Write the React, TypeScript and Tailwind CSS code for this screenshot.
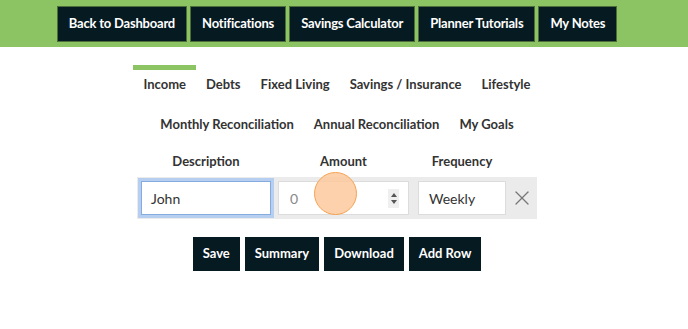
import { X } from 'lucide-react';

const NAV = ['Back to Dashboard', 'Notifications', 'Savings Calculator', 'Planner Tutorials', 'My Notes'];
const TABS_1 = ['Income', 'Debts', 'Fixed Living', 'Savings / Insurance', 'Lifestyle'];
const TABS_2 = ['Monthly Reconciliation', 'Annual Reconciliation', 'My Goals'];
const ACTIONS = ['Save', 'Summary', 'Download', 'Add Row'];

function Tab({ label, active }: { label: string; active?: boolean }) {
  return (
    <div
      className={`h-[40px] px-[10px] pt-[5px] border-t-[5px] leading-[18px] text-[13px] font-bold text-[#333] ${
        active ? 'border-[#8cc463]' : 'border-transparent'
      }`}
    >
      {label}
    </div>
  );
}

export default function App() {
  return (
    <div className="w-[688px] h-[329px] bg-white font-['Lato','Open_Sans',sans-serif]">
      {/* top nav */}
      <div className="h-[47px] bg-[#8cc463] pr-[14px] pt-[6px] flex justify-center gap-[3px]">
        {NAV.map((n) => (
          <div
            key={n}
            className="h-[36px] px-[11px] flex items-center bg-[#061a22] text-white text-[13px] tracking-[-0.2px] font-bold border border-[#4d6e3a]"
          >
            {n}
          </div>
        ))}
      </div>

      <div className="pr-[14px] flex flex-col items-center">
        {/* tabs */}
        <div className="mt-[18px] flex">
          {TABS_1.map((t, i) => (
            <Tab key={t} label={t} active={i === 0} />
          ))}
        </div>
        <div className="flex">
          {TABS_2.map((t) => (
            <Tab key={t} label={t} />
          ))}
        </div>

        {/* form */}
        <div className="flex flex-col">
          <div className="h-[32px] pt-[7px] pl-[4px] flex leading-[18px] text-[13px] font-bold text-[#333]">
            <div className="w-[130px] text-center">Description</div>
            <div className="w-[131px] ml-[7px] text-center">Amount</div>
            <div className="w-[88px] ml-[9px] text-center">Frequency</div>
          </div>
          <div className="relative w-[400px] h-[42px] bg-[#ebebeb] pl-[4px] flex items-center">
            <div className="w-[130px] h-[34px] bg-white border border-[#86abde] ring-[3px] ring-[#b6cff0] flex items-center pl-[9px] text-[14px] text-[#333]">
              John
            </div>
            <div className="w-[131px] h-[34px] ml-[7px] bg-white border border-[#dcdcdc] flex items-center justify-between pl-[11px] pr-[9px] text-[14px] text-[#888]">
              <span>0</span>
              <div className="w-[11px] h-[19px] bg-[#efefef] flex flex-col items-center justify-center gap-[3px]">
                <svg width="6" height="4" viewBox="0 0 6 4">
                  <path d="M3 0L6 4H0z" fill="#555" />
                </svg>
                <svg width="6" height="4" viewBox="0 0 6 4">
                  <path d="M0 0H6L3 4z" fill="#555" />
                </svg>
              </div>
            </div>
            <div className="w-[88px] h-[34px] ml-[9px] bg-white border border-[#dcdcdc] flex items-center pl-[10px] text-[14px] text-[#333]">
              Weekly
            </div>
            <div className="flex-1 flex justify-center">
              <X size={24} strokeWidth={1.3} className="text-[#777]" />
            </div>
            {/* click marker */}
            <div className="absolute left-[177px] top-[-5px] w-[43px] h-[43px] rounded-full bg-[#fcc99c]/85 border-[1.5px] border-[#f5a354]" />
          </div>
        </div>

        {/* actions */}
        <div className="mt-[18px] flex gap-[5px]">
          {ACTIONS.map((a) => (
            <div
              key={a}
              className="h-[34px] px-[10px] flex items-center bg-[#061a22] text-white text-[13px] font-bold"
            >
              {a}
            </div>
          ))}
        </div>
      </div>
    </div>
  );
}
